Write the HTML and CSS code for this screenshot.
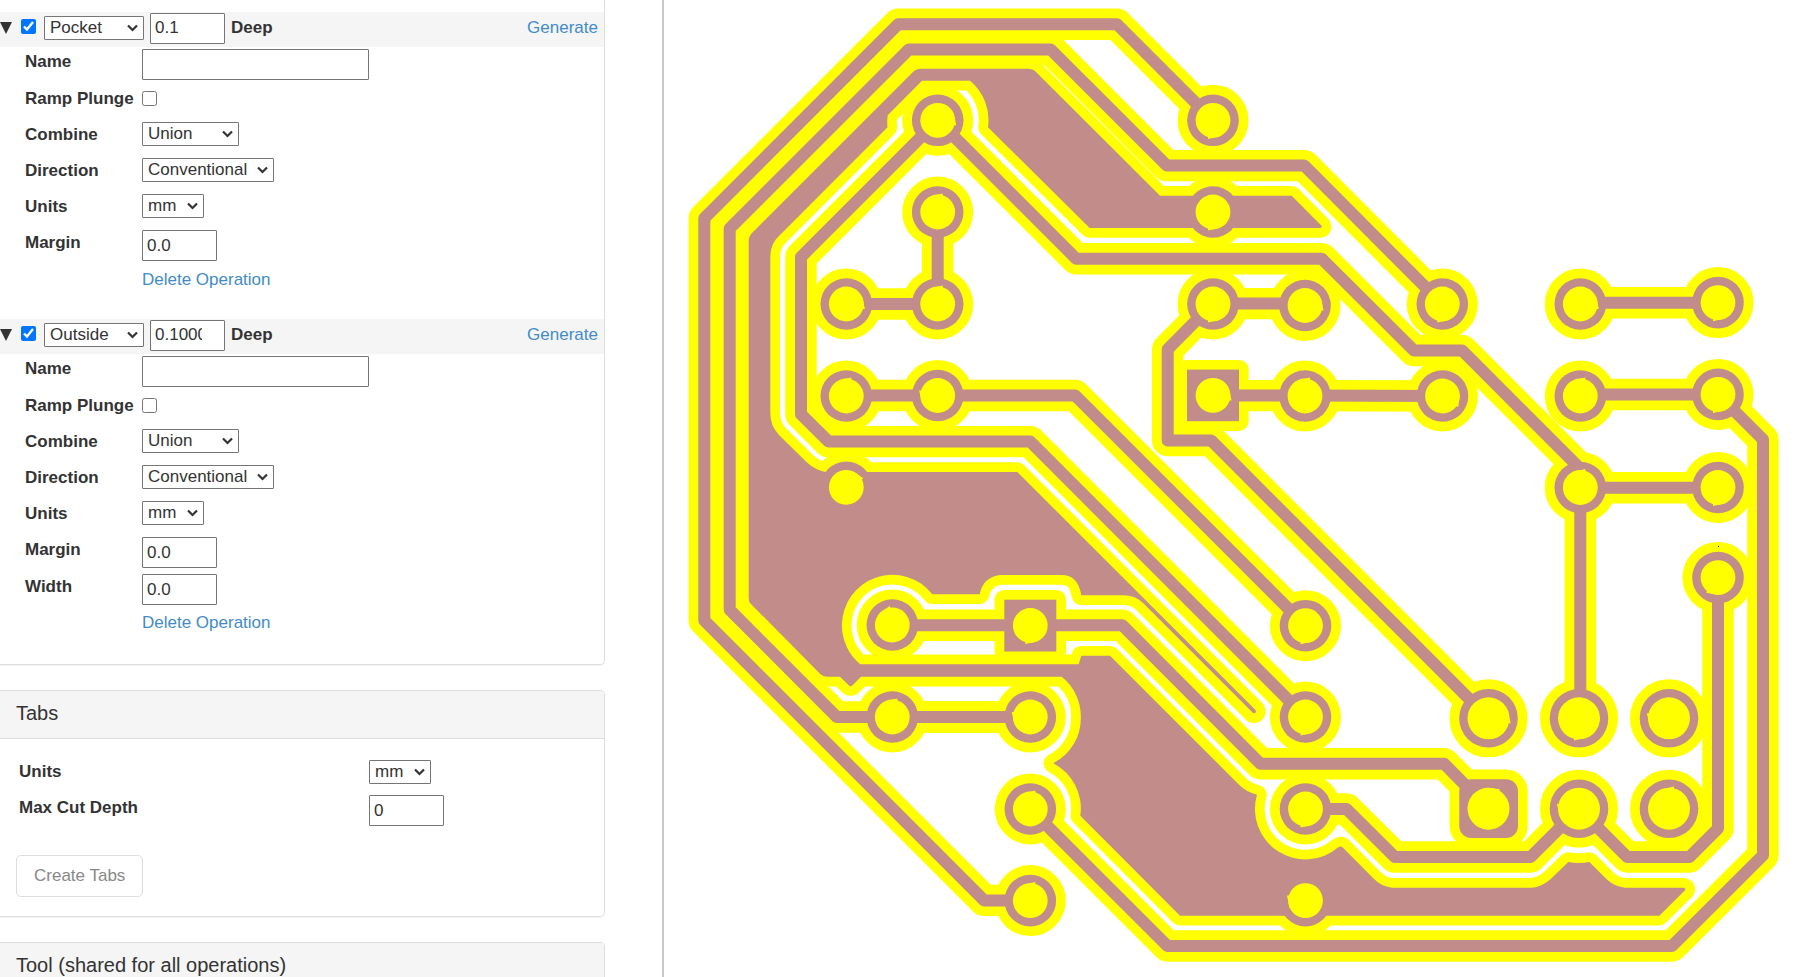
FILE: index.html
```html
<!DOCTYPE html>
<html lang="en">
<head>
<meta charset="utf-8">
<title>Operations</title>
<link rel="stylesheet" href="styles.css">
</head>
<body>
<div class="app">
  <aside class="sidebar">
    <section class="panel operations">
      <form class="operation">
        <div class="op-head">
          <svg class="caret" viewBox="0 0 12 12"><path d="M0 0h12L6 12z"/></svg>
          <input class="check" type="checkbox" checked aria-label="Enable pocket operation">
          <select class="select wide" aria-label="Operation type"><option>Pocket</option><option>Outside</option></select>
          <input class="text short" type="text" value="0.1" aria-label="Cut depth">
          <span class="deep">Deep</span>
          <a class="link generate" href="#">Generate</a>
        </div>
        <div class="row tall"><label for="name1">Name</label><input class="text long" id="name1" type="text"></div>
        <div class="row"><label for="ramp1">Ramp Plunge</label><input class="check" id="ramp1" type="checkbox"></div>
        <div class="row"><label for="comb1">Combine</label><select class="select wide" id="comb1"><option>Union</option></select></div>
        <div class="row"><label for="dir1">Direction</label><select class="select widest" id="dir1"><option>Conventional</option></select></div>
        <div class="row"><label for="unit1">Units</label><select class="select unit" id="unit1"><option>mm</option></select></div>
        <div class="row tall"><label for="marg1">Margin</label><input class="text short" id="marg1" type="text" value="0.0"></div>
        <div class="row"><a class="link delete" href="#">Delete Operation</a></div>
      </form>
      <form class="operation">
        <div class="op-head">
          <svg class="caret" viewBox="0 0 12 12"><path d="M0 0h12L6 12z"/></svg>
          <input class="check" type="checkbox" checked aria-label="Enable outside operation">
          <select class="select wide" aria-label="Operation type"><option>Outside</option><option>Pocket</option></select>
          <input class="text short" type="text" value="0.1000" aria-label="Cut depth">
          <span class="deep">Deep</span>
          <a class="link generate" href="#">Generate</a>
        </div>
        <div class="row tall"><label for="name2">Name</label><input class="text long" id="name2" type="text"></div>
        <div class="row"><label for="ramp2">Ramp Plunge</label><input class="check" id="ramp2" type="checkbox"></div>
        <div class="row"><label for="comb2">Combine</label><select class="select wide" id="comb2"><option>Union</option></select></div>
        <div class="row"><label for="dir2">Direction</label><select class="select widest" id="dir2"><option>Conventional</option></select></div>
        <div class="row"><label for="unit2">Units</label><select class="select unit" id="unit2"><option>mm</option></select></div>
        <div class="row tall"><label for="marg2">Margin</label><input class="text short" id="marg2" type="text" value="0.0"></div>
        <div class="row"><label for="width2">Width</label><input class="text short" id="width2" type="text" value="0.0"></div>
        <div class="row"><a class="link delete" href="#">Delete Operation</a></div>
      </form>
    </section>

    <section class="panel">
      <h2 class="panel-title">Tabs</h2>
      <form class="panel-body">
        <div class="row setting"><label for="tabunit">Units</label><select class="select unit" id="tabunit"><option>mm</option></select></div>
        <div class="row setting tall"><label for="tabdepth">Max Cut Depth</label><input class="text short" id="tabdepth" type="text" value="0"></div>
        <button class="button" type="button" disabled>Create Tabs</button>
      </form>
    </section>

    <section class="panel">
      <h2 class="panel-title">Tool (shared for all operations)</h2>
    </section>
  </aside>

  <main class="preview">
    <svg class="board" viewBox="664 0 1139 977" role="img" aria-label="Circuit board tool paths">
      <defs>
        <circle id="pad" r="25.8"/>
        <circle id="pad-large" r="29.3"/>
        <g id="hole"><circle r="17.4"/><path d="M-8-15.5L5-18.6V-15z"/></g>
        <g id="hole-large"><circle r="21"/><path d="M-8-19L5-22.2V-18z"/></g>
        <g id="traces">
          <path d="M1213 120.3L1117 24.3H898.2L704.3 218.2V620.5L984.2 900.4H1030.3"/>
          <path d="M1030 717H836.8L729.7 609.8V228.5L908.8 49.4H1050.7L1166.8 165.6H1304.2L1442.3 304"/>
          <path d="M1305.5 717L1030.2 441.6H828.5L801 414.2V256.9L937.7 120.3L1076.2 258.7H1321.8L1414 350.6H1462.2L1580.3 468.7V718.3"/>
          <path d="M937.7 212V304H846.3"/>
          <path d="M846.3 395.5H1075.2L1305.5 625.7"/>
          <path d="M1305 303.6H1213L1167.7 349.2V440.5H1211.2L1488.5 718.3"/>
          <path d="M1213 395.6H1305L1442.5 396"/>
          <path d="M1580.3 302.8H1718"/>
          <path d="M1580.3 394.5H1718L1763 439.5V855.3L1672 946H1167.5L1030.3 809"/>
          <path d="M1580.3 487.7H1718"/>
          <path d="M1718 577.5V828.5L1689.5 857H1627.2L1579 808.7L1530.6 857H1394.8L1346.5 809H1305.5"/>
          <path d="M892.3 625.3H1122.3L1260.4 763.7H1444.2L1488.5 808.7"/>
          <path d="M892.3 717H1030"/>
        </g>
        <g id="solids">
          <path d="M748.7 241Q748.7 236.3 752 233L913 72Q916.3 68.7 921 68.7H1028Q1032.7 68.7 1036 72L1160 195.7H1291.7L1321.3 225.6Q1322.5 228 1320 228H1089.7L988 127.3A51 51 0 0 0 970 80.7H922L887.7 115.3A51 51 0 0 0 887.5 127.3L780 235Q770.3 243 770.3 257V413Q770.3 426 779 435L806.7 462.3Q815 470 825.7 472H1017.3L1255.3 709.7Q1257 713 1254 713.3Q1252 713 1251.3 711.3L1143.3 603.3Q1136 596 1125 595.3H1081.3Q1078 575 1061.7 575H1000Q983 577 979.7 594.3H932.3A50.5 50.5 0 0 0 841.9 625A50.5 50.5 0 0 0 860.3 664.3H1078.7L1081.3 655.7H1110L1238.3 784Q1246 792 1257 794.7A50.5 50.5 0 0 0 1338.3 847.3Q1341 845.5 1342.5 847.3L1373.3 878.3Q1381 886.5 1391.7 887.7H1531.7Q1542 887 1551 878.7L1568.3 862Q1579 864 1589.3 862L1606.7 879.3Q1615 887 1625 887.7H1684Q1686 888.5 1685 890.3L1659.3 915.7H1180L1080.3 815.7A50.5 50.5 0 0 0 1053.3 763.3A50.5 50.5 0 0 0 1080.8 717A50.5 50.5 0 0 0 1061.7 676.7H861L852.3 685.5Q850.5 687 849 685.5L840 676.7H827Q823 676.7 820 673.7L751 604Q748.7 602 748.7 598Z"/>
          <rect x="1187" y="369.6" width="52" height="51.6"/>
          <rect x="1004.3" y="599.7" width="52" height="51.8"/>
          <rect x="1459.3" y="779.3" width="58.7" height="58.7" rx="12"/>
          <use href="#pad" x="937.7" y="120.3"/><use href="#pad" x="1213" y="120.3"/>
          <use href="#pad" x="937.7" y="212"/><use href="#pad" x="1213" y="212"/>
          <use href="#pad" x="846.3" y="304"/><use href="#pad" x="937.7" y="304"/>
          <use href="#pad" x="1213" y="304"/><use href="#pad" x="1305" y="305.5"/>
          <use href="#pad" x="1442.3" y="304"/><use href="#pad" x="1580.3" y="304"/><use href="#pad" x="1718" y="302.6"/>
          <use href="#pad" x="846.3" y="396"/><use href="#pad" x="937.7" y="395.5"/>
          <use href="#pad" x="1305" y="396"/><use href="#pad" x="1442.5" y="396"/>
          <use href="#pad" x="1580.3" y="396"/><use href="#pad" x="1718" y="394.4"/>
          <use href="#pad" x="846.3" y="487.3"/><use href="#pad" x="1580.3" y="487.5"/><use href="#pad" x="1718" y="487.5"/>
          <use href="#pad" x="1718" y="577.6"/><use href="#pad" x="892.3" y="625"/><use href="#pad" x="1305.5" y="625.7"/>
          <use href="#pad" x="892.3" y="717"/><use href="#pad" x="1030.3" y="717"/><use href="#pad" x="1305.5" y="717"/>
          <use href="#pad" x="1030.3" y="809"/><use href="#pad" x="1305.5" y="809"/>
          <use href="#pad" x="1030.3" y="900.6"/><use href="#pad" x="1305.5" y="900.6"/>
          <use href="#pad-large" x="1488.5" y="718.3"/><use href="#pad-large" x="1579" y="718.3"/><use href="#pad-large" x="1669" y="718.3"/>
          <use href="#pad-large" x="1579" y="808.7"/><use href="#pad-large" x="1669" y="808.7"/>
        </g>
      </defs>
      <use class="trace-halo" href="#traces"/>
      <use class="solid-halo" href="#solids"/>
      <use class="trace" href="#traces"/>
      <use class="solid" href="#solids"/>
      <g class="holes">
        <use href="#hole" transform="translate(937.7 120.3) rotate(90)"/>
        <use href="#hole" transform="translate(1213 120.3) rotate(180)"/>
        <use href="#hole" transform="translate(937.7 212)"/>
        <use href="#hole" transform="translate(1213 212) rotate(180)"/>
        <use href="#hole" transform="translate(846.3 304) rotate(90)"/>
        <use href="#hole" transform="translate(937.7 304)"/>
        <use href="#hole" transform="translate(1213 304) rotate(180)"/>
        <use href="#hole" transform="translate(1305 305.5) rotate(90)"/>
        <use href="#hole" transform="translate(1442.3 304) rotate(180)"/>
        <use href="#hole" transform="translate(1580.3 304) rotate(90)"/>
        <use href="#hole" transform="translate(1718 302.6) rotate(180)"/>
        <use href="#hole" transform="translate(846.3 396)"/>
        <use href="#hole" transform="translate(937.7 395.5) rotate(270)"/>
        <use href="#hole" transform="translate(1213 395.4) rotate(90)"/>
        <use href="#hole" transform="translate(1305 396)"/>
        <use href="#hole" transform="translate(1442.5 396) rotate(110)"/>
        <use href="#hole" transform="translate(1580.3 396)"/>
        <use href="#hole" transform="translate(1718 394.4) rotate(180)"/>
        <use href="#hole" transform="translate(846.3 487.3) rotate(47)"/>
        <use href="#hole" transform="translate(1580.3 487.5)"/>
        <use href="#hole" transform="translate(1718 487.5) rotate(180)"/>
        <use href="#hole" transform="translate(1718 577.6) rotate(203)"/>
        <use href="#hole" transform="translate(892.3 625) rotate(-23)"/>
        <use href="#hole" transform="translate(1030.3 625.5) rotate(180)"/>
        <use href="#hole" transform="translate(1305.5 625.7) rotate(180)"/>
        <use href="#hole" transform="translate(892.3 717)"/>
        <use href="#hole" transform="translate(1030.3 717) rotate(270)"/>
        <use href="#hole" transform="translate(1305.5 717) rotate(180)"/>
        <use href="#hole" transform="translate(1030.3 809)"/>
        <use href="#hole" transform="translate(1305.5 809) rotate(180)"/>
        <use href="#hole" transform="translate(1030.3 900.6)"/>
        <use href="#hole" transform="translate(1305.5 900.6) rotate(270)"/>
        <use href="#hole-large" transform="translate(1488.5 718.3) rotate(90)"/>
        <use href="#hole-large" transform="translate(1579 718.3) rotate(180)"/>
        <use href="#hole-large" transform="translate(1669 718.3) rotate(270)"/>
        <use href="#hole-large" transform="translate(1488.5 808.7) rotate(17)"/>
        <use href="#hole-large" transform="translate(1579 808.7) rotate(270)"/>
        <use href="#hole-large" transform="translate(1669 808.7)"/>
      </g>
      <rect x="1718" y="546" width="1" height="1"/>
    </svg>
  </main>
</div>
</body>
</html>
```
FILE: styles.css
```css
* { box-sizing: border-box; }

body {
  margin: 0;
  background: #fff;
  color: #333;
  font-family: "Liberation Sans", Arial, sans-serif;
  font-size: 17px;
  line-height: 25px;
}

.app {
  display: flex;
  height: 100vh;
  overflow: hidden;
}

.sidebar {
  flex: none;
  width: 662px;
  padding-right: 57px;
  overflow: hidden;
}

.preview {
  flex: 1;
  min-width: 0;
  border-left: 2px solid #c8c8c8;
}

/* Panels */
.panel {
  margin-bottom: 25px;
  border: 1px solid #ddd;
  border-left: 0;
  border-radius: 0 5px 5px 0;
  box-shadow: 0 1px 1px rgba(0, 0, 0, 0.05);
}

.operations {
  display: flex;
  flex-direction: column;
  gap: 18px;
  padding: 12px 0 20px;
  border-top: 0;
  border-top-right-radius: 0;
}

.panel-title {
  margin: 0;
  padding: 10px 16px 12px;
  border-bottom: 1px solid #ddd;
  border-radius: 0 4px 0 0;
  background: #f5f5f5;
  font-size: 20px;
  font-weight: normal;
}

.panel-body { padding: 18px 16px 19px; }

/* Operation header */
.op-head {
  display: flex;
  align-items: center;
  height: 35px;
  padding-right: 6px;
  background: #f5f5f5;
}

.caret {
  width: 12px;
  height: 12px;
  margin: 0 9px 4px 0;
  fill: #333;
}

.op-head .check { margin-bottom: 6px; }
.op-head .select { width: 100px; margin: 0 6px 4px 8px; }
.op-head .text { margin-bottom: 3px; }
.deep { margin: 0 auto 5px 6px; font-weight: bold; }
.generate { margin-bottom: 5px; }

/* Field rows */
.row {
  display: grid;
  grid-template-columns: 117px 1fr;
  align-items: start;
  height: 36px;
  padding: 2px 0 0 25px;
}

.row.tall { height: 37px; }
.row label { font-weight: bold; white-space: nowrap; }
.row .check { margin-top: 5px; }
.delete { grid-column: 2; }

.row.setting {
  grid-template-columns: 350fr 219fr;
  padding-left: 3px;
}

.setting .select { margin-top: 1px; }

.link { color: #428bca; text-decoration: none; }

/* Controls */
.check { width: 15px; height: 15px; margin: 0; }

.text {
  height: 31px;
  padding: 0 22px 0 4px;
  border: 1px solid #767676;
  border-radius: 1px;
  background: #fff;
  color: #333;
  font: inherit;
}

.short { width: 75px; }
.long { width: 227px; }

.select {
  appearance: none;
  height: 24px;
  padding: 0 0 0 5px;
  border: 1px solid #767676;
  border-radius: 1px;
  background: #fff url("data:image/svg+xml,%3Csvg xmlns='http://www.w3.org/2000/svg' width='11' height='8'%3E%3Cpath d='M1 1.5L5.5 6L10 1.5' fill='none' stroke='%23333' stroke-width='2.2'/%3E%3C/svg%3E") no-repeat right 5px center;
  color: #333;
  font: inherit;
  line-height: 22px;
}

.wide { width: 97px; }
.widest { width: 132px; }
.unit { width: 62px; }

.button {
  display: block;
  height: 42px;
  margin-top: 25px;
  padding: 0 17px 2px;
  border: 1px solid #ddd;
  border-radius: 5px;
  background: #fff;
  color: #888;
  font: inherit;
}

/* Board drawing */
.board { display: block; width: 100%; }
.trace-halo, .trace { fill: none; stroke-linejoin: round; }
.trace-halo { stroke: #ff0; stroke-width: 31.4; }
.trace { stroke: #c18c8a; stroke-width: 12; }
.solid-halo { fill: #ff0; stroke: #ff0; stroke-width: 19.4; stroke-linejoin: round; }
.solid { fill: #c18c8a; }
.holes { fill: #ff0; }
```
